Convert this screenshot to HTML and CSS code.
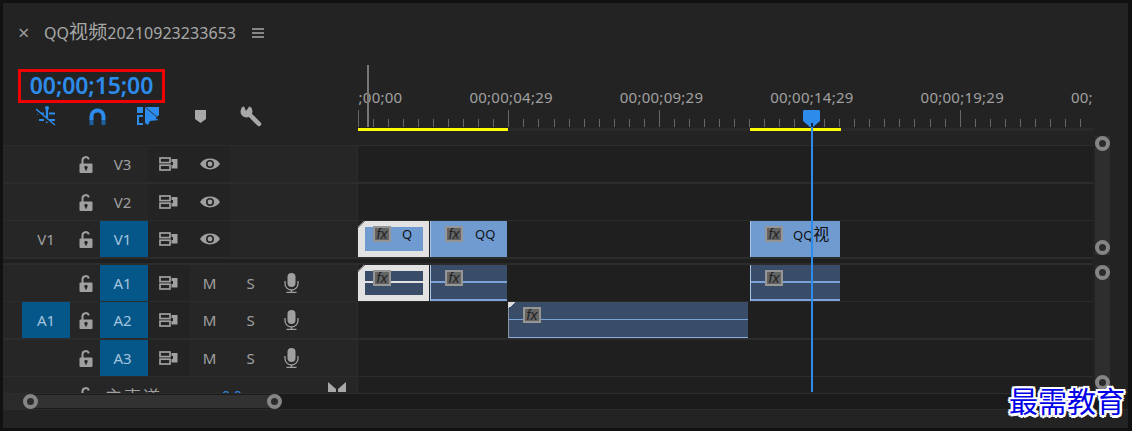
FILE: index.html
```html
<!DOCTYPE html>
<html lang="zh">
<head>
    <meta charset="UTF-8">
    <title>QQ视频20210923233653</title>
    <link rel="stylesheet" href="styles.css">
</head>
<body>

<svg class="defs">
    <symbol id="lock" viewBox="0 0 14 17">
        <path d="M3.500 8V4.500a3.300 3.300 0 0 1 6.400-1.200" fill="none" stroke="currentColor" stroke-width="2"/>
        <rect x="0.500" y="7.500" width="13" height="9.500" rx="1" fill="currentColor"/>
        <circle cx="7" cy="11.500" r="1.700" fill="#262626"/>
        <rect x="6.200" y="11.500" width="1.600" height="3" fill="#262626"/>
    </symbol>
    <symbol id="sync" viewBox="0 0 19 14">
        <rect x="1" y="1" width="10" height="4.600" fill="none" stroke="currentColor" stroke-width="1.700"/>
        <rect x="1" y="8.200" width="10" height="4.800" fill="none" stroke="currentColor" stroke-width="1.700"/>
        <path d="M12.500 2H18.500V11.500H12.500V8H14V5H12.500Z" fill="currentColor"/>
    </symbol>
    <symbol id="eye" viewBox="0 0 20 12">
        <path d="M0 6C4 -1.200 16 -1.200 20 6C16 13.200 4 13.200 0 6Z" fill="currentColor"/>
        <circle cx="10" cy="6" r="4" fill="#232323"/>
        <circle cx="10" cy="6" r="2.400" fill="currentColor"/>
    </symbol>
    <symbol id="mic" viewBox="0 0 15 20">
        <rect x="3.500" y="0" width="8" height="14" rx="4" fill="currentColor"/>
        <path d="M1 8V10.500a6.500 6.500 0 0 0 13 0V8" fill="none" stroke="currentColor" stroke-width="1.300"/>
        <path d="M7.500 17V19.400M2.500 19.400H12.500" fill="none" stroke="currentColor" stroke-width="1.300"/>
    </symbol>
</svg>

<div class="panel">
    <div class="tab">
        <span class="tab-close">×</span>
        <span class="tab-title">QQ<span class="tab-cjk">视频</span>20210923233653</span>
        <svg class="tab-menu" width="12" height="10" viewBox="0 0 12 10">
            <path d="M0 1H12M0 5H12M0 9H12" stroke="#a8a8a8" stroke-width="1.400"/>
        </svg>
    </div>

    <div class="body">
        <div class="content">
            <div class="top">
                <div class="controls">
                    <div class="timecode">00;00;15;00</div>
                    <div class="tools">
                        <svg class="tool tool-snap" width="20" height="20" viewBox="0 0 20 20">
                            <circle cx="11" cy="2" r="2" fill="#2d8ceb"/>
                            <path d="M11 2V17M1 7.500H8M13 7.500H19M3 14H8M13 14H19" stroke="#2d8ceb" stroke-width="2.200"/>
                            <path d="M0 4.500L18 20" stroke="#232323" stroke-width="3"/>
                            <path d="M0 3L19 19" stroke="#2d8ceb" stroke-width="1.400"/>
                        </svg>
                        <svg class="tool tool-magnet" width="17" height="17" viewBox="0 0 17 17">
                            <path d="M2.500 12V8.500a6 6 0 0 1 12 0V12" fill="none" stroke="#2d8ceb" stroke-width="4"/>
                            <path d="M2.500 12V17M14.500 12V17" fill="none" stroke="#1d5f9f" stroke-width="4"/>
                        </svg>
                        <svg class="tool tool-link" width="22" height="18" viewBox="0 0 22 18">
                            <rect x="0" y="0" width="6" height="6" fill="#2d8ceb"/>
                            <path d="M6 9H1V17H6" fill="none" stroke="#2d8ceb" stroke-width="2"/>
                            <path d="M8 0H22V8L18.500 11.500L22 13L13 14L11 18L8 16Z" fill="#2d8ceb"/>
                            <path d="M8 0L20 10" stroke="#232323" stroke-width="0.800"/>
                        </svg>
                        <svg class="tool tool-marker" width="11" height="13" viewBox="0 0 11 13">
                            <path d="M0 0H11V9L5.500 13L0 9Z" fill="#a8a8a8"/>
                        </svg>
                        <svg class="tool tool-wrench" width="22" height="22" viewBox="0 0 22 22">
                            <path d="M8 8L19 19" stroke="#a8a8a8" stroke-width="4.500" stroke-linecap="round"/>
                            <circle cx="6.500" cy="6.500" r="6" fill="#a8a8a8"/>
                            <path d="M6 6L11 -1L3 -1Z" fill="#232323"/>
                        </svg>
                    </div>
                </div>
                <div class="ruler">
                    <div class="ruler-labels">
                        <span>00;00;00;00</span>
                        <span>00;00;04;29</span>
                        <span>00;00;09;29</span>
                        <span>00;00;14;29</span>
                        <span>00;00;19;29</span>
                        <span>00;00;24;29</span>
                    </div>
                    <div class="ruler-ticks"></div>
                    <div class="ruler-range">
                        <span class="range range-a"></span>
                        <span class="range range-b"></span>
                    </div>
                </div>
            </div>

            <div class="row row-thick">
                <div class="head">
                    <span class="src"></span>
                    <span class="lock"><svg width="14" height="17"><use href="#lock"/></svg></span>
                    <span class="target">V3</span>
                    <span class="btn dark"><svg width="19" height="14"><use href="#sync"/></svg></span>
                    <span class="btn dark"><svg width="20" height="12"><use href="#eye"/></svg></span>
                </div>
                <div class="lane"></div>
            </div>
            <div class="row">
                <div class="head">
                    <span class="src"></span>
                    <span class="lock"><svg width="14" height="17"><use href="#lock"/></svg></span>
                    <span class="target">V2</span>
                    <span class="btn dark"><svg width="19" height="14"><use href="#sync"/></svg></span>
                    <span class="btn dark"><svg width="20" height="12"><use href="#eye"/></svg></span>
                </div>
                <div class="lane"></div>
            </div>
            <div class="row row-none">
                <div class="head">
                    <span class="src">V1</span>
                    <span class="lock"><svg width="14" height="17"><use href="#lock"/></svg></span>
                    <span class="target on">V1</span>
                    <span class="btn dark"><svg width="19" height="14"><use href="#sync"/></svg></span>
                    <span class="btn dark"><svg width="20" height="12"><use href="#eye"/></svg></span>
                </div>
                <div class="lane">
                    <div class="clip video selected linked w-71"><i class="fx">fx</i><span class="clip-name name-q">Q</span></div>
                    <div class="clip video w-77 gap-1"><i class="fx">fx</i><span class="clip-name">QQ</span></div>
                    <div class="clip video w-90 gap-243"><i class="fx">fx</i><span class="clip-name name-long">QQ<span class="clip-cjk">视</span></span></div>
                </div>
            </div>

            <div class="split"></div>

            <div class="row">
                <div class="head">
                    <span class="src"></span>
                    <span class="lock"><svg width="14" height="17"><use href="#lock"/></svg></span>
                    <span class="target on">A1</span>
                    <span class="btn dark"><svg width="19" height="14"><use href="#sync"/></svg></span>
                    <span class="btn">M</span>
                    <span class="btn">S</span>
                    <span class="btn"><svg width="15" height="20"><use href="#mic"/></svg></span>
                </div>
                <div class="lane">
                    <div class="clip audio selected linked w-71"><i class="fx">fx</i></div>
                    <div class="clip audio w-77 gap-1"><i class="fx">fx</i></div>
                    <div class="clip audio w-90 gap-243"><i class="fx">fx</i></div>
                </div>
            </div>
            <div class="row row-thick">
                <div class="head">
                    <span class="src on">A1</span>
                    <span class="lock"><svg width="14" height="17"><use href="#lock"/></svg></span>
                    <span class="target on">A2</span>
                    <span class="btn dark"><svg width="19" height="14"><use href="#sync"/></svg></span>
                    <span class="btn">M</span>
                    <span class="btn">S</span>
                    <span class="btn"><svg width="15" height="20"><use href="#mic"/></svg></span>
                </div>
                <div class="lane">
                    <div class="clip audio thin w-240 gap-150"><i class="fx">fx</i></div>
                </div>
            </div>
            <div class="row">
                <div class="head">
                    <span class="src"></span>
                    <span class="lock"><svg width="14" height="17"><use href="#lock"/></svg></span>
                    <span class="target on">A3</span>
                    <span class="btn dark"><svg width="19" height="14"><use href="#sync"/></svg></span>
                    <span class="btn">M</span>
                    <span class="btn">S</span>
                    <span class="btn"><svg width="15" height="20"><use href="#mic"/></svg></span>
                </div>
                <div class="lane"></div>
            </div>
            <div class="row row-master">
                <div class="head">
                    <span class="src"></span>
                    <span class="lock"><svg width="14" height="17"><use href="#lock"/></svg></span>
                    <span class="master-name">主声道</span>
                    <span class="master-value">0.0</span>
                    <svg class="master-icon" width="18" height="10" viewBox="0 0 18 10">
                        <path d="M0 0L8 7V10H0ZM18 0L10 7V10H18Z" fill="#a8a8a8"/>
                    </svg>
                </div>
                <div class="lane"></div>
            </div>
        </div>

        <div class="side">
            <div class="vbar vbar-video"><span class="knob"></span><span class="knob"></span></div>
            <div class="vbar vbar-audio"><span class="knob"></span><span class="knob"></span></div>
        </div>
    </div>

    <div class="hscroll">
        <div class="hbar"><span class="knob knob-start"></span><span class="knob knob-end"></span></div>
    </div>

    <div class="playhead">
        <svg class="playhead-cap" width="17" height="17" viewBox="0 0 17 17">
            <path d="M0 1L1 0H16L17 1V11L10 17H7L0 11Z" fill="#2d8ceb"/>
            <rect x="8" y="13" width="2" height="4" fill="#16283c"/>
        </svg>
        <div class="playhead-line"></div>
    </div>
    <div class="cursor-line"></div>
    <div class="watermark">最需教育</div>
</div>

</body>
</html>
```

FILE: styles.css
```css
/* base */
html, body {
    margin: 0;
    height: 431px;
    overflow: hidden;
    background-color: #111;
}
body {
    font-family: "Noto Sans", "Noto Sans CJK SC", sans-serif;
    color: #a8a8a8;
}
.defs {
    display: none;
}
.panel {
    position: relative;
    width: 1125px;
    height: 425px;
    margin: 3px;
    background-color: #232323;
    overflow: hidden;
}

/* tab */
.tab {
    display: flex;
    align-items: center;
    height: 60px;
    padding-left: 15px;
}
.tab-close {
    width: 26px;
    font-size: 20px;
    line-height: 24px;
    color: #9a9a9a;
}
.tab-title {
    font-size: 16px;
    letter-spacing: 0.05px;
    color: #a8a8a8;
}
.tab-cjk {
    font-size: 19px;
    line-height: 20px;
}
.tab-menu {
    margin-left: 16px;
}

/* layout */
.body {
    display: flex;
}
.content {
    width: 1090px;
    flex: none;
}
.top {
    display: flex;
    height: 82px;
    border-bottom: 1px solid #2c2c2c;
}
.controls {
    width: 355px;
    flex: none;
    padding: 6px 0 0 15px;
    box-sizing: border-box;
}
.timecode {
    width: 147px;
    height: 34px;
    box-sizing: border-box;
    border: 3px solid #f00000;
    font-size: 23px;
    line-height: 27px;
    font-weight: 600;
    letter-spacing: -0.1px;
    text-align: center;
    color: #2d8ceb;
}
.tools {
    display: flex;
    align-items: flex-start;
    margin-top: 2px;
}
.tool {
    flex: none;
}
.tool-snap {
    margin: 1px 0 0 18px;
}
.tool-magnet {
    margin: 3px 0 0 33px;
}
.tool-link {
    margin: 2px 0 0 31px;
}
.tool-marker {
    margin: 5px 0 0 36px;
}
.tool-wrench {
    margin: 0 0 0 34px;
}

/* ruler */
.ruler {
    width: 735px;
    overflow: hidden;
}
.ruler-labels {
    display: flex;
    height: 47px;
    margin-left: -39px;
    box-sizing: border-box;
    padding-top: 24px;
    font-size: 15px;
    line-height: 20px;
    letter-spacing: 0.25px;
    color: #a0a0a0;
}
.ruler-labels span {
    flex: none;
    width: 150.4px;
}
.ruler-ticks {
    width: 723px;
    height: 17px;
    margin-bottom: 1px;
    background:
        repeating-linear-gradient(90deg, #666 0 1px, transparent 1px 150.4px),
        repeating-linear-gradient(90deg, #666 0 1px, transparent 1px 15.04px) 0 100% / 100% 8px no-repeat;
}
.ruler-range {
    display: flex;
    height: 3px;
    background-color: #2a2a2a;
}
.range {
    height: 3px;
    background-color: #ffff00;
}
.range-a {
    width: 150px;
}
.range-b {
    width: 91px;
    margin-left: 242px;
}

/* tracks */
.row {
    display: flex;
    height: 36px;
    border-bottom: 1px solid #2c2c2c;
}
.row-thick {
    border-bottom-width: 2px;
}
.row-none {
    border-bottom: none;
}
.row-master {
    height: 16px;
    border-bottom: none;
    overflow: hidden;
}
.head {
    display: flex;
    width: 354px;
    height: 36px;
    flex: none;
    background-color: #262626;
    border-right: 1px solid #2c2c2c;
    font-size: 15px;
    color: #a0a0a0;
}
.head > span {
    display: flex;
    align-items: center;
    justify-content: center;
    flex: none;
}
.src {
    width: 48px;
    margin-left: 19px;
    box-sizing: border-box;
}
.lock {
    width: 30px;
    padding-left: 1px;
    box-sizing: border-box;
}
.target {
    width: 48px;
    padding-right: 3px;
    box-sizing: border-box;
}
.on {
    background-color: #05578a;
    color: #a4c4dc;
}
.btn {
    width: 41px;
}
.dark {
    background-color: #232323;
}
.head > .master-name {
    width: 117px;
    margin-left: 5px;
    justify-content: flex-start;
    font-size: 17px;
    letter-spacing: 2px;
}
.head > .master-value {
    justify-content: flex-start;
    font-size: 14px;
    color: #2d8ceb;
}
.master-icon {
    margin: 5px 11px 0 auto;
}
.lane {
    display: flex;
    width: 735px;
    flex: none;
    height: 36px;
    background-color: #1f1f1f;
}
.split {
    height: 8px;
    box-sizing: border-box;
    background-color: #1f1f1f;
    border-top: 2px solid #2c2c2c;
    border-bottom: 2px solid #2c2c2c;
}

/* clips */
.clip {
    position: relative;
    display: flex;
    align-items: flex-start;
    flex: none;
    height: 36px;
    box-sizing: border-box;
    padding: 5px 0 0 14px;
    border-left: 1px solid #a9c4e6;
}
.w-71 { width: 71px; }
.w-77 { width: 77px; }
.w-90 { width: 90px; }
.w-240 { width: 240px; }
.gap-1 { margin-left: 1px; }
.gap-150 { margin-left: 150px; }
.gap-243 { margin-left: 243px; }
.video {
    background-color: #6f9bd1;
}
.audio {
    background:
        linear-gradient(#7ca3d8, #7ca3d8) 0 16px / 100% 2px no-repeat,
        linear-gradient(#7ca3d8, #7ca3d8) 0 34px / 100% 2px no-repeat,
        #394d68;
}
.thin {
    background:
        linear-gradient(#7ca3d8, #7ca3d8) 0 17px / 100% 1px no-repeat,
        linear-gradient(#8fb0dc, #8fb0dc) 0 35px / 100% 1px no-repeat,
        #394d68;
    border-left-color: #8a97a8;
}
.thin::before {
    content: "";
    position: absolute;
    left: -1px;
    top: 0;
    width: 7px;
    height: 7px;
    background: linear-gradient(135deg, #dcdcdc 0 50%, transparent 50%);
}
.selected {
    box-shadow: inset 0 0 0 6px #e2e2e2;
    border-left-color: #e2e2e2;
}
.audio.selected {
    background:
        linear-gradient(#e2e2e2, #e2e2e2) 0 16px / 100% 2px no-repeat,
        #394d68;
}
.linked::before {
    content: "";
    position: absolute;
    left: -1px;
    top: 0;
    width: 7px;
    height: 7px;
    background: linear-gradient(135deg, #1f1f1f 0 40%, #8a8a8a 40% 54%, transparent 54%);
}
.fx {
    position: relative;
    width: 18px;
    height: 16px;
    flex: none;
    box-sizing: border-box;
    background-color: #646464;
    border: 2px solid #959595;
    font-family: "Liberation Sans", sans-serif;
    font-size: 14px;
    line-height: 12px;
    text-align: center;
    color: #222;
}
.clip-name {
    margin-left: 12px;
    font-size: 13px;
    line-height: 16px;
    color: #111;
}
.name-q {
    margin-left: 11px;
}
.name-long {
    margin-left: 10px;
}
.clip-cjk {
    font-size: 16px;
    line-height: 16px;
}

/* scroll bars */
.knob {
    width: 15px;
    height: 15px;
    flex: none;
    box-sizing: border-box;
    border: 4px solid #858585;
    border-radius: 50%;
    background-color: #2c2c2c;
}
.side {
    padding: 73px 0 0 2px;
}
.vbar {
    display: flex;
    flex-direction: column;
    align-items: center;
    justify-content: space-between;
    width: 15px;
    background-color: #2e2e2e;
}
.vbar-video {
    height: 119px;
}
.vbar-audio {
    height: 125px;
    margin-top: 10px;
}
.hscroll {
    display: flex;
    align-items: center;
    height: 15px;
    background: linear-gradient(#2a2a2a, #2a2a2a) 0 0 / 28px 100% no-repeat, #1b1b1b;
    border-top: 1px solid #2c2c2c;
    border-bottom: 1px solid #2c2c2c;
}
.hbar {
    display: flex;
    align-items: center;
    justify-content: space-between;
    width: 243px;
    height: 13px;
    margin-left: 28px;
    background-color: #323232;
}
.knob-start {
    margin-left: -8px;
}
.knob-end {
    margin-right: -8px;
}

/* things lying over the tracks */
.playhead {
    position: absolute;
    left: 800px;
    top: 107px;
    display: flex;
    flex-direction: column;
    align-items: center;
    width: 17px;
}
.playhead-cap {
    flex: none;
}
.playhead-line {
    width: 2px;
    height: 265px;
    background-color: #2d8ceb;
}
.cursor-line {
    position: absolute;
    left: 364px;
    top: 62px;
    width: 2px;
    height: 62px;
    background-color: #777;
}
.watermark {
    position: absolute;
    right: 3px;
    top: 378px;
    font-family: "Noto Sans CJK SC", sans-serif;
    font-size: 29px;
    line-height: 38px;
    font-weight: 400;
    color: #0000e6;
    text-shadow:
        2.5px 0 0 #fff, -2.5px 0 0 #fff, 0 2.5px 0 #fff, 0 -2.5px 0 #fff,
        2px 2px 0 #fff, -2px 2px 0 #fff, 2px -2px 0 #fff, -2px -2px 0 #fff;
}
```
